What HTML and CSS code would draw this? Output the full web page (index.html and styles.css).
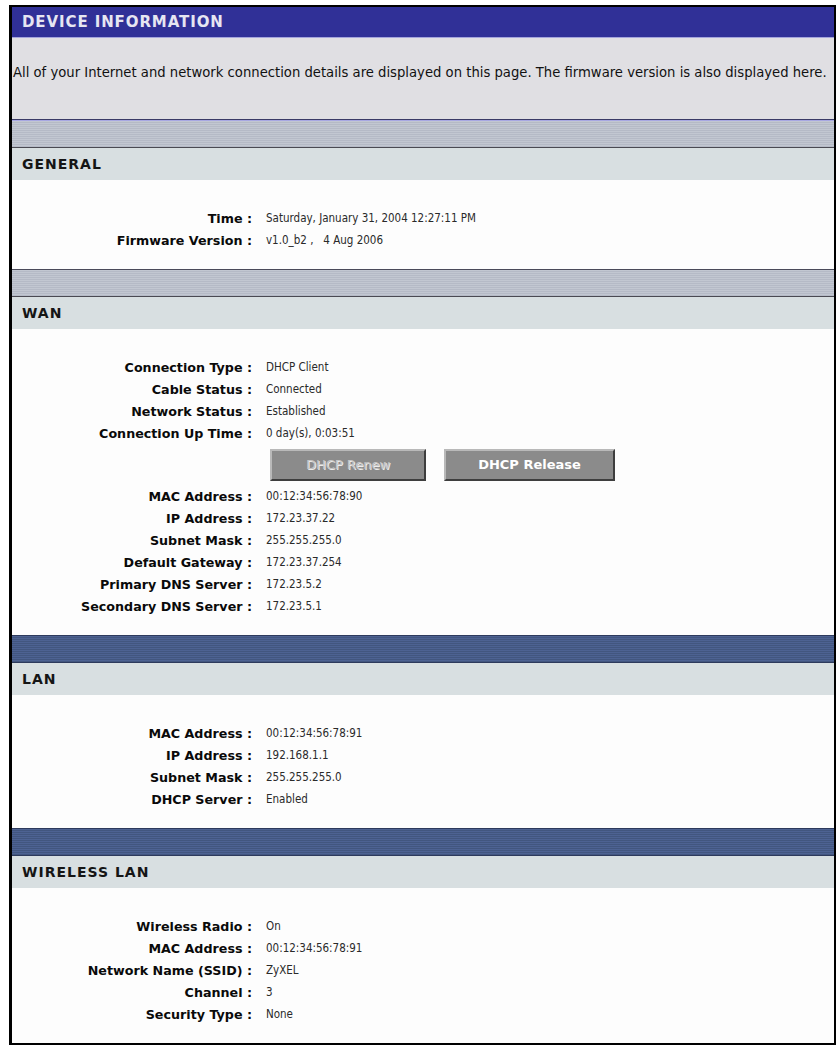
FILE: index.html
```html
<!DOCTYPE html>
<html>
<head>
<meta charset="utf-8">
<title>Device Information</title>
<link rel="stylesheet" href="styles.css">
</head>
<body>
<div class="frame">
  <div class="title">DEVICE INFORMATION</div>
  <div class="desc">All of your Internet and network connection details are displayed on this page. The firmware version is also displayed here.</div>

  <div class="sep sep-light sep-first"></div>
  <div class="sec-head">GENERAL</div>
  <div class="sec-body sec-general">
    <span class="lbl">Time :</span><span class="val">Saturday, January 31, 2004 12:27:11 PM</span>
    <span class="lbl">Firmware Version :</span><span class="val">v1.0_b2 ,&nbsp;&nbsp;&nbsp;4 Aug 2006</span>
  </div>

  <div class="sep sep-light"></div>
  <div class="sec-head">WAN</div>
  <div class="sec-body">
    <span class="lbl">Connection Type :</span><span class="val">DHCP Client</span>
    <span class="lbl">Cable Status :</span><span class="val">Connected</span>
    <span class="lbl">Network Status :</span><span class="val">Established</span>
    <span class="lbl">Connection Up Time :</span><span class="val">0 day(s), 0:03:51</span>
    <div class="btn-row">
      <button class="btn btn-renew" disabled>DHCP Renew</button>
      <button class="btn btn-release">DHCP Release</button>
    </div>
    <span class="lbl">MAC Address :</span><span class="val">00:12:34:56:78:90</span>
    <span class="lbl">IP Address :</span><span class="val">172.23.37.22</span>
    <span class="lbl">Subnet Mask :</span><span class="val">255.255.255.0</span>
    <span class="lbl">Default Gateway :</span><span class="val">172.23.37.254</span>
    <span class="lbl">Primary DNS Server :</span><span class="val">172.23.5.2</span>
    <span class="lbl">Secondary DNS Server :</span><span class="val">172.23.5.1</span>
  </div>

  <div class="sep sep-dark"></div>
  <div class="sec-head">LAN</div>
  <div class="sec-body">
    <span class="lbl">MAC Address :</span><span class="val">00:12:34:56:78:91</span>
    <span class="lbl">IP Address :</span><span class="val">192.168.1.1</span>
    <span class="lbl">Subnet Mask :</span><span class="val">255.255.255.0</span>
    <span class="lbl">DHCP Server :</span><span class="val">Enabled</span>
  </div>

  <div class="sep sep-dark"></div>
  <div class="sec-head">WIRELESS LAN</div>
  <div class="sec-body">
    <span class="lbl">Wireless Radio :</span><span class="val">On</span>
    <span class="lbl">MAC Address :</span><span class="val">00:12:34:56:78:91</span>
    <span class="lbl">Network Name (SSID) :</span><span class="val">ZyXEL</span>
    <span class="lbl">Channel :</span><span class="val">3</span>
    <span class="lbl">Security Type :</span><span class="val">None</span>
  </div>
</div>
</body>
</html>
```

FILE: styles.css
```css
html, body {
  margin: 0;
  padding: 0;
  background: #ffffff;
}

body {
  font-family: "DejaVu Sans", Verdana, sans-serif;
}

.frame {
  margin: 5px 0 0 9px;
  width: 822px;
  border-top: 2px solid #000;
  border-right: 2px solid #000;
  border-bottom: 2px solid #000;
  border-left: 3px solid #000;
  background: #fdfdfd;
}

.title {
  height: 30px;
  line-height: 30px;
  padding-left: 10px;
  background: #303097;
  border-bottom: 1px solid #a4a4dc;
  color: #e6e6f2;
  font-weight: bold;
  font-size: 15px;
  letter-spacing: 0.9px;
}

.desc {
  box-sizing: border-box;
  height: 82px;
  padding: 27px 0 0 1px;
  background: #e0dfe3;
  border-bottom: 1px solid #3a3a66;
  color: #111;
  font-family: "DejaVu Sans", Verdana, sans-serif;
  font-size: 13.2px;
  line-height: 16px;
  white-space: nowrap;
}

.sep {
  height: 26px;
  border-top: 1px solid #4a4a5a;
  border-bottom: 1px solid #4a4a52;
}

.sep-light {
  background: repeating-linear-gradient(to bottom, #c2c7d1 0 1px, #b5bac6 1px 2px);
}

.sep-first {
  border-top-color: #a8a8e2;
}

.sep-dark {
  border-top-color: #2d3a5c;
  border-bottom-color: #2d3a5c;
  background: repeating-linear-gradient(to bottom, #4d6292 0 1px, #42567f 1px 2px);
}

.sec-head {
  height: 32px;
  line-height: 32px;
  padding-left: 10px;
  background: #d8dfe1;
  color: #151515;
  font-weight: bold;
  font-size: 14px;
  letter-spacing: 1px;
}

.sec-body {
  display: grid;
  grid-template-columns: 240px 1fr;
  grid-auto-rows: minmax(22px, auto);
  column-gap: 14px;
  align-items: center;
  padding: 27px 0 18px;
}

.lbl {
  text-align: right;
  font-weight: bold;
  font-size: 12.7px;
  color: #0a0a0a;
  white-space: nowrap;
}

.val {
  font-family: "DejaVu Sans Condensed", "DejaVu Sans", sans-serif;
  font-size: 11.5px;
  color: #2a2a2a;
  white-space: nowrap;
}

.btn-row {
  grid-column: 2;
  height: 41px;
  display: flex;
  align-items: center;
  gap: 18px;
  padding-left: 4px;
}

.btn {
  box-sizing: border-box;
  height: 32px;
  background: #8b8b8b;
  border-top: 2px solid #b9b9b9;
  border-left: 2px solid #b9b9b9;
  border-right: 2px solid #3e3e3e;
  border-bottom: 2px solid #3e3e3e;
  font-family: "DejaVu Sans", Verdana, sans-serif;
  font-size: 13px;
  padding: 0;
}

.btn-renew {
  width: 156px;
  color: #c6c6c6;
  text-shadow: 1px 1px 0 #ececec;
}

.btn-release {
  width: 171px;
  color: #ffffff;
  font-weight: bold;
}
```
